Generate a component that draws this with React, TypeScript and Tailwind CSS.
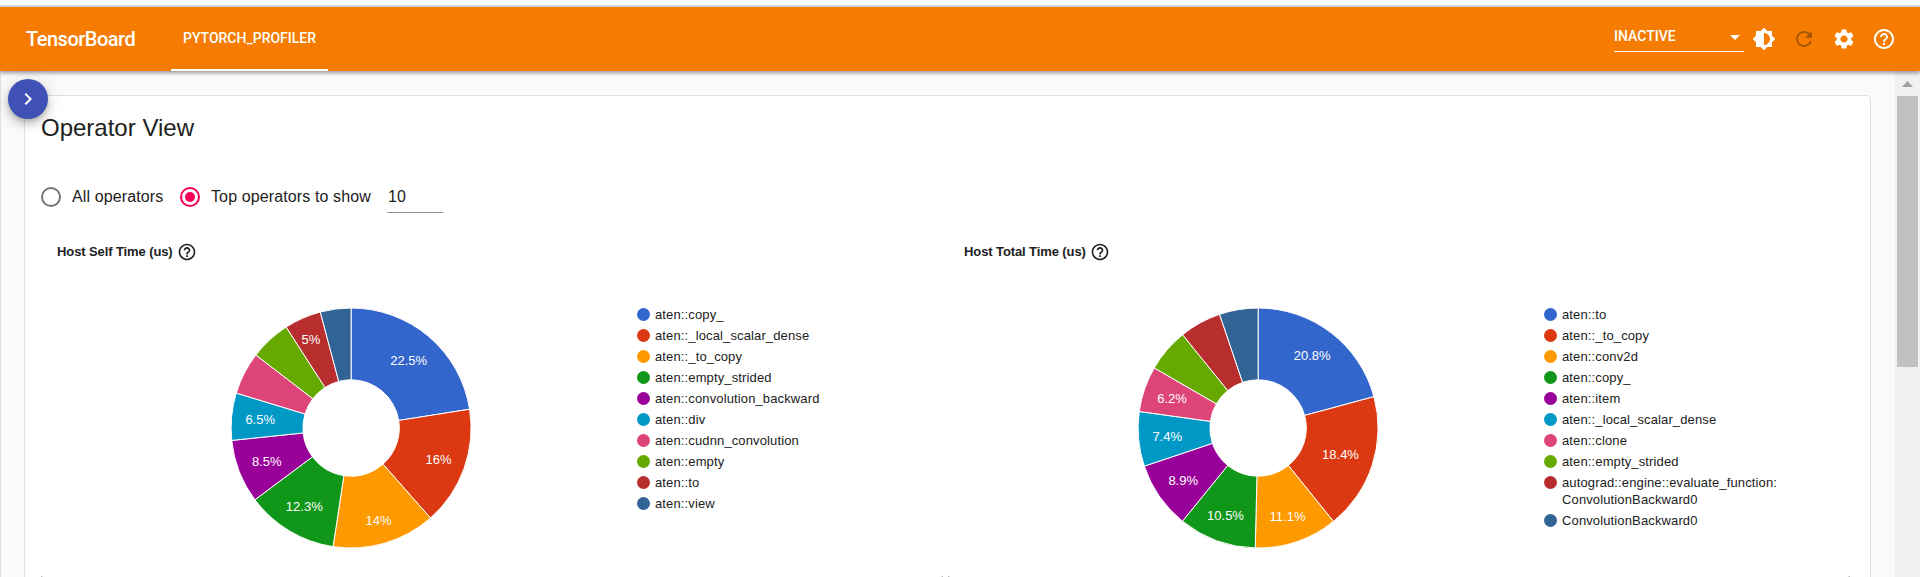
import React from "react";
import {
  MdArrowDropDown,
  MdBrightness6,
  MdChevronRight,
  MdHelpOutline,
  MdRefresh,
  MdSettings,
} from "react-icons/md";

const COLORS = [
  "#3366cc", "#dc3912", "#ff9900", "#109618", "#990099",
  "#0099c6", "#dd4477", "#66aa00", "#b82e2e", "#316395",
];

type Label = { text: string; x: number; y: number };
type ChartData = {
  title: string;
  cx: number;
  stops: number[];
  labels: Label[];
  legend: string[][];
};

const HOST_SELF: ChartData = {
  title: "Host Self Time (us)",
  cx: 120.1,
  stops: [0, 22.5, 38.5, 52.4, 64.8, 73.35, 79.7, 85.4, 90.9, 95.87, 100],
  labels: [
    { text: "22.5%", x: 177.7, y: 56.5 },
    { text: "16%", x: 207.5, y: 155.5 },
    { text: "14%", x: 147.5, y: 216.5 },
    { text: "12.3%", x: 73.3, y: 202.5 },
    { text: "8.5%", x: 35.7, y: 157.5 },
    { text: "6.5%", x: 29.2, y: 115.5 },
    { text: "5%", x: 80, y: 35.5 },
  ],
  legend: [
    ["aten::copy_"], ["aten::_local_scalar_dense"], ["aten::_to_copy"],
    ["aten::empty_strided"], ["aten::convolution_backward"], ["aten::div"],
    ["aten::cudnn_convolution"], ["aten::empty"], ["aten::to"], ["aten::view"],
  ],
};

const HOST_TOTAL: ChartData = {
  title: "Host Total Time (us)",
  cx: 120.1,
  stops: [0, 20.8, 39.2, 50.38, 60.85, 69.85, 77.2, 83.35, 89.17, 94.8, 100],
  labels: [
    { text: "20.8%", x: 174.2, y: 52 },
    { text: "18.4%", x: 202.5, y: 150.5 },
    { text: "11.1%", x: 149.5, y: 212.5 },
    { text: "10.5%", x: 87.5, y: 211.5 },
    { text: "8.9%", x: 45.2, y: 176.5 },
    { text: "7.4%", x: 29.2, y: 132.5 },
    { text: "6.2%", x: 34, y: 94.5 },
  ],
  legend: [
    ["aten::to"], ["aten::_to_copy"], ["aten::conv2d"], ["aten::copy_"],
    ["aten::item"], ["aten::_local_scalar_dense"], ["aten::clone"],
    ["aten::empty_strided"],
    ["autograd::engine::evaluate_function:", "ConvolutionBackward0"],
    ["ConvolutionBackward0"],
  ],
};

const CY = 120;
const OUTER = 120;
const INNER = 48.2;

function slicePath(cx: number, from: number, to: number) {
  const at = (pct: number, r: number) => {
    const a = (pct / 100) * Math.PI * 2;
    return `${(cx + r * Math.sin(a)).toFixed(2)},${(CY - r * Math.cos(a)).toFixed(2)}`;
  };
  return `M${at(from, INNER)} L${at(from, OUTER)} A${OUTER},${OUTER} 0 0 1 ${at(to, OUTER)} L${at(to, INNER)} A${INNER},${INNER} 0 0 0 ${at(from, INNER)} Z`;
}

function Donut({ data }: { data: ChartData }) {
  return (
    <svg width="241" height="241" viewBox="0 0 241 241" className="shrink-0">
      {COLORS.map((color, i) => (
        <path
          key={color}
          d={slicePath(data.cx, data.stops[i], data.stops[i + 1])}
          fill={color}
          stroke="#fff"
          strokeWidth="1"
        />
      ))}
      {data.labels.map((l) => (
        <text key={l.text} x={l.x} y={l.y} textAnchor="middle" fill="#fff" className="text-[13px]">
          {l.text}
        </text>
      ))}
    </svg>
  );
}

function ChartPanel({ data }: { data: ChartData }) {
  return (
    <section className="flex h-[351px] w-[902px] shrink-0 flex-col">
      <div className="flex h-[52px] items-center gap-[4px] pl-4">
        <h2 className="text-[13px] font-bold tracking-[-0.1px] whitespace-nowrap">{data.title}</h2>
        <MdHelpOutline size={20} />
      </div>
      <div className="flex pt-[30px] pl-[190px]">
        <Donut data={data} />
        <ul className="flex flex-col gap-1.5 pl-[165px]">
          {data.legend.map((lines, i) => (
            <li key={i} className="flex gap-[5px] text-[13px] leading-[17px] tracking-[0.13px]">
              <svg width="13" height="13" className="shrink-0">
                <circle cx="6.5" cy="6.5" r="6.5" fill={COLORS[i]} />
              </svg>
              <span className="-mt-0.5 whitespace-nowrap">
                {lines.map((line) => (
                  <span key={line} className="block">{line}</span>
                ))}
              </span>
            </li>
          ))}
        </ul>
      </div>
      <div className="mt-auto flex justify-between">
        <svg width="2" height="2">
          <path d="M0 0L2 2H0Z" fill="#bdbdbd" />
        </svg>
        <svg width="2" height="2">
          <path d="M2 0L0 2H2Z" fill="#bdbdbd" />
        </svg>
      </div>
    </section>
  );
}

function Header() {
  return (
    <header className="relative z-10 flex h-16 shrink-0 items-stretch bg-[#f57c00] font-[Roboto,sans-serif] text-white shadow-[0_2px_4px_rgba(0,0,0,0.4)]">
      <div className="flex w-[171px] items-center pl-[26px] text-[20px] font-medium tracking-[-0.5px]">TensorBoard</div>
      <div className="flex w-[157px] justify-center border-b-2 border-white pt-[21px] text-[14px] leading-[20px] font-medium">
        PYTORCH_PROFILER
      </div>
      <div className="ml-auto flex items-center pr-6">
        <div className="-mt-[4px] mr-2 flex h-[30px] w-[130px] items-center justify-between border-b border-white text-[14px] font-medium">
          INACTIVE
          <MdArrowDropDown size={24} className="-mr-[3px]" />
        </div>
        <div className="flex items-center gap-4">
          <MdBrightness6 size={24} />
          <MdRefresh size={24} className="text-black/30" />
          <MdSettings size={24} />
          <MdHelpOutline size={24} />
        </div>
      </div>
    </header>
  );
}

export default function App() {
  return (
    <div className="flex h-[577px] w-[1920px] flex-col overflow-hidden bg-white font-['Liberation_Sans',Arial,sans-serif] text-[#212121]">
      <div className="h-[7px] shrink-0 border-b-2 border-[#dadce0]" />
      <Header />
      <div className="relative flex min-h-0 flex-1 border-l border-[#e0e0e0] bg-[#fafafa]">
        <button className="absolute top-2 left-[7px] flex size-10 items-center justify-center rounded-full bg-[#3f51b5] text-white shadow-[0_3px_5px_-1px_rgba(0,0,0,0.2),0_6px_10px_rgba(0,0,0,0.14),0_1px_18px_rgba(0,0,0,0.12)]">
          <MdChevronRight size={24} />
        </button>
        <main className="mt-6 ml-[23px] h-[520px] w-[1847px] rounded-[4px] border border-[#e0e0e0] bg-white px-4">
          <h1 className="pt-4 text-[24px] leading-[32px]">Operator View</h1>
          <div className="mt-[35px] flex h-[36px] items-center text-[16px] tracking-[0.12px]">
            <span className="size-5 rounded-full border-2 border-[#757575]" />
            <span className="ml-[11px] w-[108px] whitespace-nowrap">All operators</span>
            <span className="flex size-5 items-center justify-center rounded-full border-2 border-[#f50057]">
              <span className="size-[10px] rounded-full bg-[#f50057]" />
            </span>
            <span className="ml-[11px] w-[176px] whitespace-nowrap">Top operators to show</span>
            <span className="h-8 w-14 border-b border-[#949494] pl-px leading-[32px]">10</span>
          </div>
          <div className="mt-[11px] flex gap-[5px]">
            <ChartPanel data={HOST_SELF} />
            <ChartPanel data={HOST_TOTAL} />
          </div>
        </main>
        <div className="ml-auto flex w-[25px] flex-col items-center bg-[#f1f1f1] pt-[10px] pr-px">
          <svg width="11" height="6">
            <path d="M0 6L5.5 0L11 6Z" fill="#a3a3a3" />
          </svg>
          <div className="mt-[9px] h-[271px] w-[21px] bg-[#c1c1c1]" />
        </div>
      </div>
    </div>
  );
}
